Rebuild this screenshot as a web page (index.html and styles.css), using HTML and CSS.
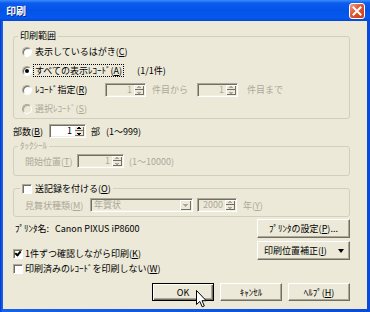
FILE: index.html
```html
<!DOCTYPE html>
<html lang="ja">

<head>
	<meta charset="UTF-8">
	<title>印刷</title>
	<link rel="stylesheet" href="styles.css">
</head>

<body>
	<div class="window">
		<div class="titlebar">
			<span class="title">印刷</span>
			<span class="close">
				<svg width="10" height="10" viewBox="0 0 10 10"><path d="M1.5 1.5 L8.5 8.5 M8.5 1.5 L1.5 8.5" stroke="#fff" stroke-width="2" stroke-linecap="square"/></svg>
			</span>
		</div>
		<div class="client">
			<div class="group range">
				<span class="group-title">印刷範囲</span>
				<div class="row"><span class="radio"></span><span>表示しているはがき(<u>C</u>)</span></div>
				<div class="row"><span class="radio on"></span><span class="focus">すべての表示ﾚｺｰﾄﾞ(<u>A</u>)</span><span class="count">(1/1件)</span></div>
				<div class="row">
					<span class="radio"></span><span class="lbl-spec">ﾚｺｰﾄﾞ指定(<u>R</u>)</span>
					<span class="spin off w41"><span class="val">1</span><span class="updown"></span></span>
					<span class="dim from">件目から</span>
					<span class="spin off w41 to-spin"><span class="val">1</span><span class="updown"></span></span>
					<span class="dim to">件目まで</span>
				</div>
				<div class="row dim"><span class="radio off"></span><span>選択ﾚｺｰﾄﾞ(<u>S</u>)</span></div>
			</div>

			<div class="row copies">
				<span class="lbl-copies">部数(<u>B</u>)</span>
				<span class="spin w37"><span class="val">1</span><span class="updown"></span></span>
				<span class="bu">部</span>
				<span class="range-note">(1～999)</span>
			</div>

			<div class="group tack">
				<span class="group-title dim">ﾀｯｸｼｰﾙ</span>
				<div class="row dim">
					<span class="lbl-start">開始位置(<u>T</u>)</span>
					<span class="spin off w47"><span class="val">1</span><span class="updown"></span></span>
					<span class="note">(1～10000)</span>
				</div>
			</div>

			<div class="group send">
				<span class="group-title check-title"><span class="check"></span>送記録を付ける(<u>O</u>)</span>
				<div class="row dim">
					<span class="lbl-kind">見舞状種類(<u>M</u>)</span>
					<span class="combo"><span class="combo-val">年賀状</span><span class="combo-btn"></span></span>
					<span class="spin off w40 year-spin"><span class="val">2000</span><span class="updown"></span></span>
					<span class="note year">年(<u>Y</u>)</span>
				</div>
			</div>

			<div class="printer-row">
				<span class="printer"><span>ﾌﾟﾘﾝﾀ名:</span><span class="printer-name">Canon PIXUS iP8600</span></span>
				<button class="btn wide">ﾌﾟﾘﾝﾀの設定(<u>P</u>)...</button>
			</div>

			<div class="options-row">
				<div class="checks">
					<div class="check-row"><span class="check on"></span>1件ずつ確認しながら印刷(<u>K</u>)</div>
					<div class="check-row"><span class="check"></span>印刷済みのﾚｺｰﾄﾞを印刷しない(<u>W</u>)</div>
				</div>
				<button class="btn wide split"><span>印刷位置補正(<u>I</u>)</span><span class="arrow"></span></button>
			</div>

			<div class="actions">
				<button class="btn default">OK</button>
				<button class="btn">ｷｬﾝｾﾙ</button>
				<button class="btn">ﾍﾙﾌﾟ(<u>H</u>)</button>
			</div>
		</div>
		<svg class="cursor" width="11" height="18" viewBox="0 0 11 18"><path d="M0.5 0.5 L0.5 14.5 L3.8 11.4 L6.2 16.8 L8.3 15.9 L6 10.7 L10.2 10.7 Z" fill="#fff" stroke="#000" stroke-width="1" stroke-linejoin="miter"/></svg>
	</div>
</body>

</html>
```

FILE: styles.css
```css
body {
	margin: 0;
	font-family: "Noto Sans CJK JP", sans-serif;
	font-size: 9px;
	color: #000;
	background: #fff;
}

.window {
	position: relative;
	width: 370px;
	height: 312px;
	display: flex;
	flex-direction: column;
	background: linear-gradient(90deg, #0733C8, #1560EC 2px, #0A4ADB);
}

.titlebar {
	height: 21px;
	flex: none;
	display: flex;
	align-items: center;
	justify-content: space-between;
	padding: 0 5px 0 6px;
	background: linear-gradient(#3D8DFB 0, #0B5CEE 3px, #0453E8 50%, #0559EF 85%, #0845CE 100%);
}

.title {
	color: #fff;
	font-weight: bold;
	font-size: 10px;
	text-shadow: 1px 1px #0A2A90;
}

.close {
	width: 16px;
	height: 16px;
	box-sizing: border-box;
	border: 1px solid #fff;
	border-radius: 3px;
	background: linear-gradient(135deg, #F3A28A, #DD5632 45%, #C53D18);
	display: flex;
	align-items: center;
	justify-content: center;
}

.client {
	flex: 1;
	margin: 0 3px 3px;
	background: #ECE9D8;
	padding: 15px 17px 0 10px;
}

.group {
	position: relative;
	border: 1px solid #D0D0BF;
	border-radius: 3px;
}

.group-title {
	position: absolute;
	left: 4px;
	top: -7px;
	padding: 0 2px;
	line-height: 12px;
	background: #ECE9D8;
}

.row {
	display: flex;
	align-items: center;
	height: 19px;
	white-space: nowrap;
}

.dim {
	color: #ACA899;
}

/* print range */
.range {
	padding: 5px 0 0 8px;
}

.radio {
	width: 10px;
	height: 10px;
	box-sizing: border-box;
	border-radius: 50%;
	border: 1px solid;
	border-color: #ACA899 #fff #fff #ACA899;
	box-shadow: inset 1px 1px #716F64;
	background: #fff;
	margin-right: 3px;
	position: relative;
	flex: none;
}

.radio.on::after {
	content: "";
	position: absolute;
	left: 2px;
	top: 2px;
	width: 4px;
	height: 4px;
	border-radius: 50%;
	background: #000;
}

.radio.off {
	background: #ECE9D8;
	box-shadow: inset 1px 1px #ACA899;
}

.focus {
	outline: 1px dotted #000;
	padding: 0 1px;
	margin-left: -1px;
	line-height: 11px;
}

.count {
	margin-left: 14px;
}

.lbl-spec {
	width: 70px;
}

.from {
	margin: 0 9px 0 6px;
}

.to {
	margin-left: 9px;
}

/* spin boxes */
.spin {
	box-sizing: border-box;
	height: 14px;
	display: inline-flex;
	align-items: stretch;
	border: 1px solid;
	border-color: #ACA899 #fff #fff #ACA899;
	box-shadow: inset 1px 1px #716F64, inset -1px -1px #F1EFE2;
	background: #fff;
	padding: 1px 1px 1px 2px;
	flex: none;
}

.spin.off {
	background: #ECE9D8;
	color: #ACA899;
}

.spin .val {
	flex: 1;
	text-align: right;
	line-height: 10px;
	padding-right: 2px;
}

.updown {
	width: 10px;
	background:
		linear-gradient(#000, #000) 3px 2px / 4px 1px no-repeat,
		linear-gradient(#000, #000) 4px 1px / 2px 1px no-repeat,
		linear-gradient(#000, #000) 3px 7px / 4px 1px no-repeat,
		linear-gradient(#000, #000) 4px 8px / 2px 1px no-repeat,
		linear-gradient(#716F64, #716F64) 0 4px / 10px 1px no-repeat,
		#ECE9D8;
	box-shadow: inset 1px 1px #fff, inset -1px -1px #716F64;
}

.spin.off .updown {
	background:
		linear-gradient(#ACA899, #ACA899) 3px 2px / 4px 1px no-repeat,
		linear-gradient(#ACA899, #ACA899) 4px 1px / 2px 1px no-repeat,
		linear-gradient(#ACA899, #ACA899) 3px 7px / 4px 1px no-repeat,
		linear-gradient(#ACA899, #ACA899) 4px 8px / 2px 1px no-repeat,
		linear-gradient(#716F64, #716F64) 0 4px / 10px 1px no-repeat,
		#ECE9D8;
}

.w37 { width: 37px; }
.w40 { width: 40px; }
.w41 { width: 41px; }
.w47 { width: 47px; }

/* copies */
.copies {
	margin-top: 3px;
	height: 18px;
}

.lbl-copies {
	width: 36px;
}

.bu {
	margin-left: 5px;
}

.range-note {
	margin-left: 6px;
}

/* tack seal */
.tack {
	margin-top: 6px;
	padding: 5px 0 5px 11px;
}

.tack .row {
	height: 18px;
}

.lbl-start {
	width: 52px;
}

.note {
	margin-left: 5px;
}

/* send record */
.send {
	margin-top: 12px;
	padding: 8px 0 3px 11px;
}

.send .row {
	height: 16px;
}

.check-title {
	display: flex;
	align-items: center;
	left: 6px;
	top: -6px;
}

.check {
	width: 10px;
	height: 10px;
	box-sizing: border-box;
	border: 1px solid;
	border-color: #ACA899 #fff #fff #ACA899;
	box-shadow: inset 1px 1px #716F64;
	background: #fff;
	margin-right: 2px;
	flex: none;
	position: relative;
}

.check-title .check {
	margin-right: 3px;
}

.check.on::after {
	content: "";
	position: absolute;
	left: 2px;
	top: 0px;
	width: 2px;
	height: 4px;
	border: solid #000;
	border-width: 0 2px 2px 0;
	transform: rotate(40deg);
}

.lbl-kind {
	width: 65px;
}

.combo {
	box-sizing: border-box;
	width: 103px;
	height: 14px;
	display: inline-flex;
	border: 1px solid;
	border-color: #ACA899 #fff #fff #ACA899;
	box-shadow: inset 1px 1px #716F64, inset -1px -1px #F1EFE2;
	background: #ECE9D8;
	padding: 1px;
	flex: none;
}

.combo-val {
	flex: 1;
	line-height: 10px;
	padding-left: 2px;
}

.combo-btn {
	width: 11px;
	box-shadow: inset 1px 1px #fff, inset -1px -1px #716F64;
	background:
		linear-gradient(#ACA899, #ACA899) 3px 4px / 5px 1px no-repeat,
		linear-gradient(#ACA899, #ACA899) 4px 5px / 3px 1px no-repeat,
		linear-gradient(#ACA899, #ACA899) 5px 6px / 1px 1px no-repeat,
		#ECE9D8;
}

.year-spin {
	margin-left: 4px;
}

.year {
	margin-left: 6px;
}

/* printer / buttons */
.printer-row {
	margin-top: 2px;
	display: flex;
	align-items: center;
	justify-content: space-between;
}

.printer {
	padding-left: 2px;
	display: flex;
	gap: 6px;
}

.btn {
	box-sizing: border-box;
	height: 19px;
	width: 62px;
	padding: 0;
	font: inherit;
	color: #000;
	background: #ECE9D8;
	border: 1px solid;
	border-color: #fff #716F64 #716F64 #fff;
	box-shadow: inset -1px -1px #ACA899;
	display: flex;
	align-items: center;
	justify-content: center;
}

.btn.wide {
	width: 93px;
}

.btn.default {
	border-color: #000;
	box-shadow: inset 1px 1px #fff, inset -1px -1px #716F64, inset -2px -2px #ACA899;
}

.btn.split {
	justify-content: space-between;
	padding: 0 5px 0 6px;
}

.arrow {
	width: 0;
	height: 0;
	border-left: 3px solid transparent;
	border-right: 3px solid transparent;
	border-top: 4px solid #000;
}

.options-row {
	margin-top: 3px;
	display: flex;
	justify-content: space-between;
	align-items: flex-start;
}

.checks {
	padding-top: 5px;
}

.check-row {
	height: 15px;
	display: flex;
	align-items: center;
	white-space: nowrap;
}

.actions {
	margin-top: 7px;
	display: flex;
	justify-content: flex-end;
	gap: 6px;
}

.actions .btn {
	height: 18px;
}

.cursor {
	position: absolute;
	left: 196px;
	top: 290px;
}
```
